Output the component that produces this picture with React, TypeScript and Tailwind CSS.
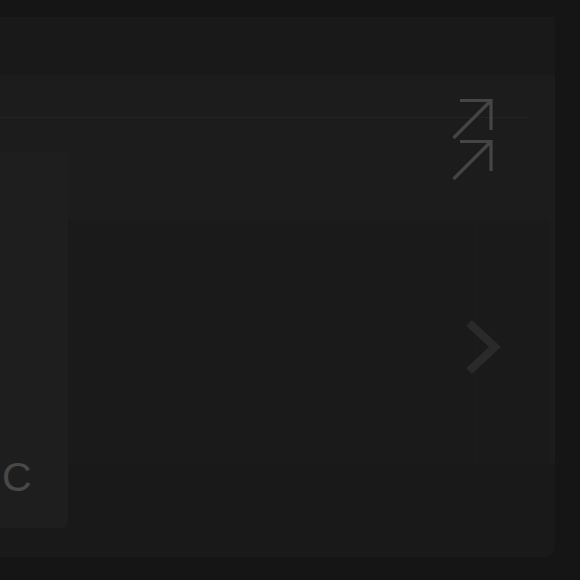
import React from "react";

export default function App() {
  return (
    <div className="w-[580px] h-[580px] bg-[#151515] pt-[17px] overflow-hidden relative" style={{ fontFamily: '"Liberation Sans", Arial, sans-serif' }}>
      <div className="w-[555px] h-[540px] bg-[#191919] rounded-br-[10px] flex flex-col overflow-hidden">
        <div className="h-[58px] shrink-0" />
        <div className="h-[77px] shrink-0 bg-[#1c1c1c] flex flex-col">
          <div className="h-px w-[527px] bg-[#242424] mt-[42px]" />
        </div>
        <div className="flex">
          <div className="w-[68px] h-[376px] shrink-0 bg-[#1e1e1e] rounded-br-[6px] flex flex-col justify-end pb-[30px]">
            <span className="text-[41px] leading-none text-[#484848] ml-[2px]">C</span>
          </div>
          <div className="flex-1 h-[311px] bg-[#1c1c1c] flex flex-col">
            <div className="mt-[68px] w-[482px] h-[243px] bg-[#1a1a1a] flex">
              <div className="w-[407px]" />
              <div className="w-px bg-[#1c1c1c]" />
            </div>
          </div>
        </div>
      </div>
      <svg className="absolute left-[450px] top-[95px]" width="45" height="92" viewBox="0 0 45 92" fill="none">
        <path d="M10 5.5 H41 V35 M41 5.5 L3.5 43" stroke="#454545" strokeWidth="3.2" />
        <path d="M10 46.5 H41 V76 M41 46.5 L3.5 84" stroke="#454545" strokeWidth="3.2" />
      </svg>
      <svg className="absolute left-[455px] top-[310px]" width="55" height="75" viewBox="0 0 55 75" fill="none">
        <path d="M14 13 L40 37 L14 61" stroke="#2a2a2a" strokeWidth="8" />
      </svg>
    </div>
  );
}
